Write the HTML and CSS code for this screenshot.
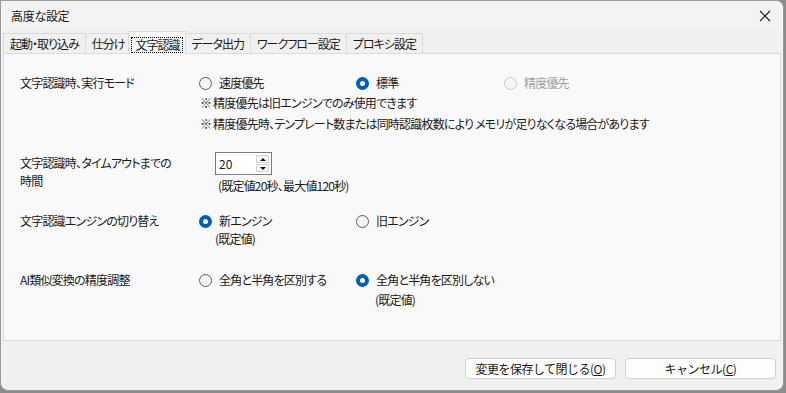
FILE: index.html
```html
<!DOCTYPE html>
<html lang="ja">
<head>
    <meta charset="UTF-8">
    <title>高度な設定</title>
    <link rel="stylesheet" href="styles.css">
</head>
<body>
    <div class="window">
        <div class="titlebar">
            <span class="title">高度な設定</span>
            <svg class="close" width="12" height="12" viewBox="0 0 12 12">
                <path d="M1 1 L11 11 M11 1 L1 11" stroke="#1a1a1a" stroke-width="1.1" fill="none"/>
            </svg>
        </div>

        <div class="tabs">
            <div class="tab">起動・取り込み</div>
            <div class="tab">仕分け</div>
            <div class="tab active"><span class="focus">文字認識</span></div>
            <div class="tab">データ出力</div>
            <div class="tab">ワークフロー設定</div>
            <div class="tab">プロキシ設定</div>
        </div>

        <div class="panel">
            <!-- 実行モード -->
            <div class="row row-mode">
                <div class="label">文字認識時、実行モード</div>
                <div class="field">
                    <div class="choices">
                        <div class="opt"><span class="radio"></span><span>速度優先</span></div>
                        <div class="opt opt-mid"><span class="radio on"></span><span>標準</span></div>
                        <div class="opt disabled"><span class="radio"></span><span>精度優先</span></div>
                    </div>
                    <p class="note">※ 精度優先は旧エンジンでのみ使用できます</p>
                    <p class="note">※ 精度優先時、テンプレート数または同時認識枚数により メモリが足りなくなる場合があります</p>
                </div>
            </div>

            <!-- タイムアウト -->
            <div class="row row-timeout">
                <div class="label label-two">文字認識時、タイムアウトまでの<br>時間</div>
                <div class="field field-indent">
                    <div class="spin">
                        <span class="spin-value">20</span>
                        <span class="spin-arrows">
                            <span class="arrow"><span class="tri-up"></span></span>
                            <span class="arrow"><span class="tri-down"></span></span>
                        </span>
                    </div>
                    <p class="hint">(既定値20秒、最大値120秒)</p>
                </div>
            </div>

            <!-- エンジン -->
            <div class="row row-engine">
                <div class="label">文字認識エンジンの切り替え</div>
                <div class="field">
                    <div class="choices">
                        <div class="opt">
                            <span class="radio on"></span>
                            <span class="opt-text">新エンジン<span class="sub sub-engine">(既定値)</span></span>
                        </div>
                        <div class="opt opt-mid"><span class="radio"></span><span>旧エンジン</span></div>
                    </div>
                </div>
            </div>

            <!-- AI類似変換 -->
            <div class="row row-ai">
                <div class="label">AI類似変換の精度調整</div>
                <div class="field">
                    <div class="choices">
                        <div class="opt"><span class="radio"></span><span>全角と半角を区別する</span></div>
                        <div class="opt opt-mid">
                            <span class="radio on"></span>
                            <span class="opt-text">全角と半角を区別しない<span class="sub sub-ai">(既定値)</span></span>
                        </div>
                    </div>
                </div>
            </div>
        </div>

        <div class="footer">
            <button class="btn">変更を保存して閉じる(<u>O</u>)</button>
            <button class="btn">キャンセル(<u>C</u>)</button>
        </div>
    </div>
</body>
</html>
```

FILE: styles.css
```css
/* Global */
body {
    margin: 0;
    background-color: #8c8c8c;
    font-family: "Noto Sans CJK JP", "Noto Sans", sans-serif;
    font-size: 12px;
    font-feature-settings: "palt";
    letter-spacing: -0.8px;
    color: #1a1a1a;
}

p {
    margin: 0;
}

/* Dialog window */
.window {
    width: 784px;
    height: 391px;
    box-sizing: border-box;
    border: 1px solid #9a9a9a;
    border-radius: 0 8px 8px 8px;
    background-color: #f0f0f0;
    display: flex;
    flex-direction: column;
    overflow: hidden;
}

/* Title bar */
.titlebar {
    height: 30px;
    background-color: #f3f3f3;
    display: flex;
    align-items: center;
    justify-content: space-between;
    padding: 0 10px 0 10px;
}

.title {
    line-height: 18px;
    letter-spacing: -0.3px;
}

.close {
    margin-right: 2px;
}

/* Tabs */
.tabs {
    display: flex;
    align-items: flex-end;
    height: 23px;
    padding-left: 2px;
    margin-bottom: -1px;
}

.tab {
    height: 20px;
    box-sizing: border-box;
    margin-bottom: 1px;
    margin-right: -1px;
    padding: 0 6px;
    line-height: 19px;
    letter-spacing: -1px;
    border: 1px solid #dadada;
    border-bottom: none;
    background-color: #f0f0f0;
}

.tab.active {
    height: 23px;
    margin: 0 -1px 0 -2px;
    padding: 3px 3px 0 3px;
    background-color: #f9f9f9;
    position: relative;
    z-index: 1;
}

.tab.active + .tab {
    margin-left: -1px;
}

.focus {
    display: inline-block;
    line-height: 14px;
    padding: 0 3px;
    outline: 1px dotted #000;
}

/* Panel */
.panel {
    margin: 0 2px;
    height: 288px;
    box-sizing: border-box;
    border: 1px solid #dcdcdc;
    background-color: #f9f9f9;
    padding: 20px 0 0 16px;
}

.row {
    display: flex;
    line-height: 18px;
}

.label {
    flex: none;
    width: 179px;
}

.choices {
    display: flex;
}

.opt {
    display: flex;
    align-items: flex-start;
    width: 157px;
}

.opt-mid {
    width: 148px;
}

.opt-text {
    display: flex;
    flex-direction: column;
}

.radio {
    flex: none;
    width: 13px;
    height: 13px;
    box-sizing: border-box;
    margin: 3px 7px 0 0;
    border: 1px solid #5c5c5c;
    border-radius: 50%;
    background-color: #f6f6f6;
}

.radio.on {
    border: 4px solid #005fb8;
    background-color: #fff;
}

.opt.disabled {
    color: #a0a0a0;
}

.opt.disabled .radio {
    border-color: #c8c8c8;
}

.note {
    line-height: 21px;
    padding-left: 1px;
}

/* Timeout row */
.row-timeout {
    margin-top: 18px;
}

.label-two {
    padding-top: 2px;
}

.field-indent {
    padding-left: 16px;
}

.spin {
    display: flex;
    width: 57px;
    height: 23px;
    box-sizing: border-box;
    border: 1px solid #7a7a7a;
    background-color: #fff;
}

.spin-value {
    flex: 1;
    padding-left: 3px;
    line-height: 21px;
    letter-spacing: 0;
}

.spin-arrows {
    display: flex;
    flex-direction: column;
    gap: 1px;
    padding: 2px 2px 0 0;
}

.arrow {
    width: 13px;
    height: 8px;
    box-sizing: border-box;
    border: 1px solid #d0d0d0;
    background-color: #f7f7f7;
    display: flex;
    align-items: center;
    justify-content: center;
}

.tri-up {
    border-left: 3px solid transparent;
    border-right: 3px solid transparent;
    border-bottom: 3px solid #111;
}

.tri-down {
    border-left: 3px solid transparent;
    border-right: 3px solid transparent;
    border-top: 3px solid #111;
}

.hint {
    margin-top: 2px;
    padding-left: 3px;
}

/* Engine row */
.row-engine {
    margin-top: 17px;
}

.sub-engine {
    line-height: 17px;
    margin-left: -4px;
}

/* AI row */
.row-ai {
    margin-top: 24px;
}

.sub-ai {
    margin-top: 2px;
    margin-left: -1px;
}

/* Footer buttons */
.footer {
    flex: 1;
    display: flex;
    justify-content: flex-end;
    align-items: flex-start;
    gap: 9px;
    padding: 17px 7px 0 0;
}

.btn {
    width: 151px;
    height: 21px;
    border: 1px solid #d0d0d0;
    border-radius: 4px;
    background-color: #fdfdfd;
    font-family: inherit;
    font-size: 12px;
    letter-spacing: -0.5px;
    color: #1a1a1a;
    padding: 0;
}
```
